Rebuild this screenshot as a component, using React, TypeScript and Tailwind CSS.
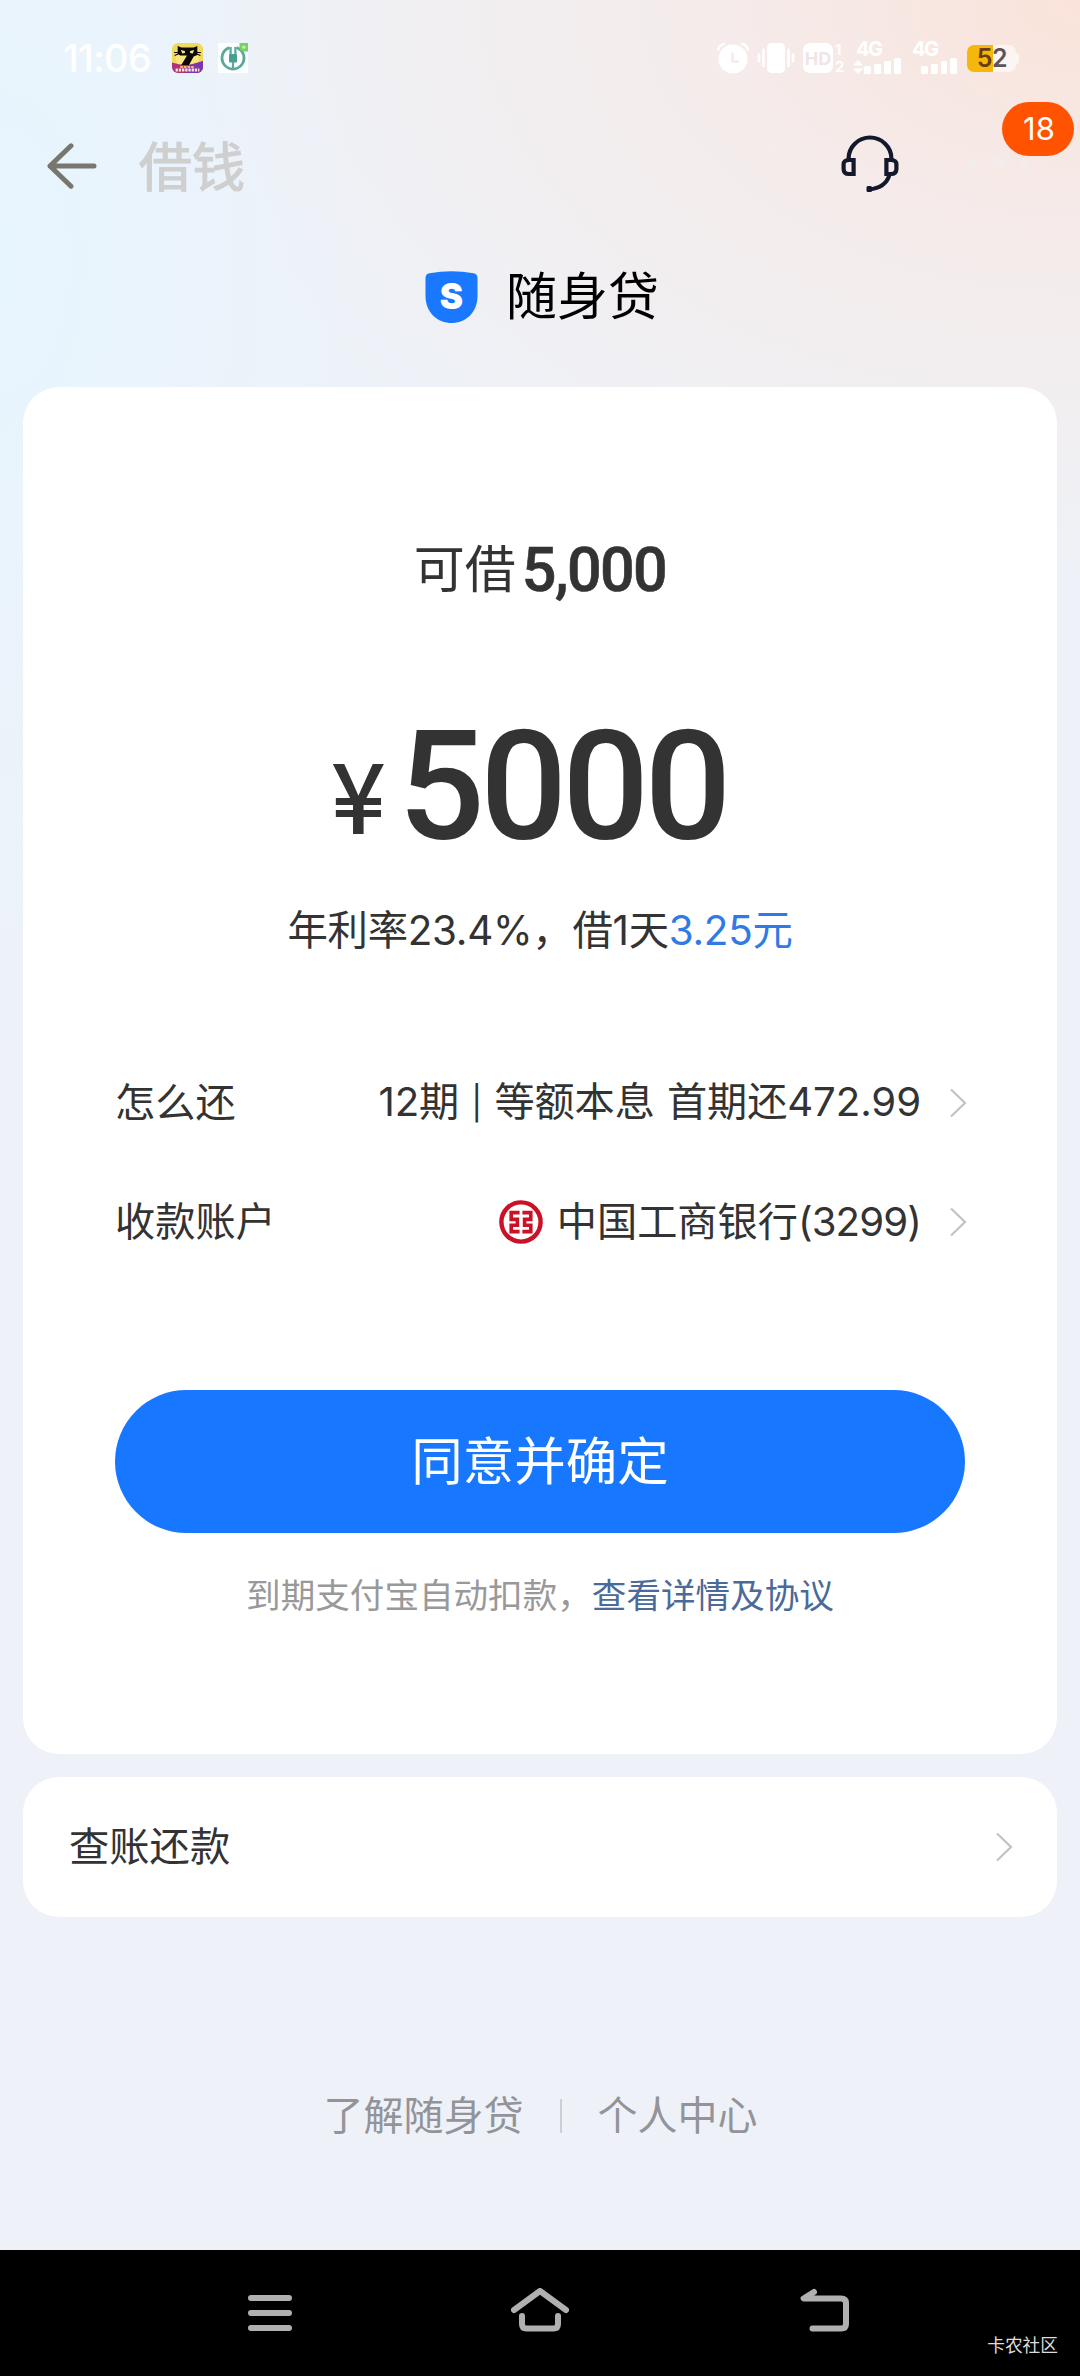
import React from 'react';

const CatAppIcon: React.FC = () => (
  <svg width="31" height="30" viewBox="0 0 30 30" preserveAspectRatio="none" className="block">
    <defs>
      <clipPath id="cat-clip">
        <rect width="30" height="30" rx="6" />
      </clipPath>
    </defs>
    <g clipPath="url(#cat-clip)">
      <rect width="30" height="30" fill="#f0d95c" />
      <circle cx="15" cy="15" r="11" fill="#fbe67c" />
      <path d="M0 19.5 Q15 25 30 18 V30 H0 Z" fill="#b0327e" />
      <path d="M13 23 L30 18 V30 H13 Z" fill="#7d35b4" />
      <path d="M5.5 3 L9 4.5 H21 L24.5 3 V12 L21 13.5 L16.5 22 H9 L14.5 12.5 H8 L5.5 11 Z" fill="#0d0906" />
      <path d="M2 9.5 H6 M24 9.5 H28 M2.5 12.5 L6 11 M27.5 12.5 L24 11" stroke="#0d0906" strokeWidth="1" />
      <path d="M8.5 7 L12.5 8 V10 L10 10.5 Z M21.5 7 L17.5 8 V10 L20 10.5 Z" fill="#f7e98a" />
      <path d="M3.5 27 H26.5" stroke="#ffe9d0" strokeWidth="3" strokeDasharray="2.2 0.9" />
      <path d="M8 24 H21" stroke="#ffb36b" strokeWidth="2" strokeDasharray="2.6 0.9" />
    </g>
  </svg>
);

const PlugAppIcon: React.FC = () => (
  <svg width="30" height="30" viewBox="0 0 30 30" className="block">
    <rect width="30" height="30" fill="#fdfefe" />
    <path d="M11.5 4.6 A11 11 0 1 0 18.5 4.6" fill="none" stroke="#5aa99b" strokeWidth="2.8" />
    <path d="M12.6 4 V11 M17.4 4 V11" stroke="#5aa99b" strokeWidth="2.2" />
    <rect x="11" y="11" width="8" height="8.5" rx="1" fill="#4b9f90" />
    <path d="M15 19 V27" stroke="#5aa99b" strokeWidth="2.2" />
    <path d="M21.5 0 H30 V8.5 H25 Q21.5 8 21.5 4 Z" fill="#79cf63" />
    <circle cx="25.8" cy="4.2" r="1.6" fill="#c9f0b8" />
  </svg>
);

const AlarmIcon: React.FC = () => (
  <svg width="34" height="32" viewBox="0 0 34 32" className="block">
    <circle cx="17" cy="17" r="14.5" fill="#fff" />
    <path d="M2 7.5 Q3.5 3 8 1.8 M32 7.5 Q30.5 3 26 1.8" fill="none" stroke="#fff" strokeWidth="2.4" strokeLinecap="round" />
    <path d="M16.6 10.5 V19.5 H23" fill="none" stroke="#f3e9e9" strokeWidth="2.2" />
  </svg>
);

const VibrateIcon: React.FC = () => (
  <svg width="38" height="32" viewBox="0 0 38 32" className="block">
    <rect x="10" y="1" width="18" height="30" rx="4.5" fill="#fff" />
    <path d="M6.5 8 V24 M31.5 8 V24" stroke="#fff" strokeWidth="2.8" strokeLinecap="round" />
    <path d="M2 13 V19 M36 13 V19" stroke="#fff" strokeWidth="2.8" strokeLinecap="round" />
  </svg>
);

const Bars: React.FC = () => (
  <div className="flex items-end gap-[3px]">
    <div className="h-[8px] w-[7px] rounded-[1.5px] bg-white" />
    <div className="h-[10px] w-[7px] rounded-[1.5px] bg-white" />
    <div className="h-[13px] w-[7px] rounded-[1.5px] bg-white" />
    <div className="h-[16px] w-[7px] rounded-[1.5px] bg-white" />
  </div>
);

const Chevron: React.FC = () => (
  <svg width="18" height="30" viewBox="0 0 18 30" className="block">
    <path d="M2 1.5 L16 15 L2 28.5" fill="none" stroke="#c2c2c2" strokeWidth="2.2" />
  </svg>
);

const HeadsetIcon: React.FC = () => (
  <svg width="58" height="58" viewBox="0 0 58 58" className="block">
    <g fill="none" stroke="#14182d" strokeWidth="4.2">
      <path d="M7.6 25 V23.5 A21.4 21 0 0 1 50.4 23.5 V25" />
      <path d="M12.6 25.5 V39 H8 Q2.6 39 2.6 34 V29.5 Q2.6 25 8 25 H12.6 Z" />
      <path d="M45.4 25.5 V39 H50 Q55.4 39 55.4 34 V29.5 Q55.4 25 50 25 H45.4 Z" />
      <path d="M48.4 40 Q44.5 53 28 54.4" />
    </g>
    <rect x="25.5" y="51" width="5.5" height="6" rx="1.5" fill="#14182d" />
  </svg>
);

const BankLogo: React.FC = () => (
  <svg width="44" height="44" viewBox="0 0 44 44" className="block">
    <circle cx="22" cy="22" r="19.6" fill="none" stroke="#cb1126" strokeWidth="4.4" />
    <g fill="none" stroke="#cb1126" strokeWidth="3.6">
      <path d="M20.6 12.6 H12.2 V19.4 H18.4 V25.2 H12.2 V31.6 H20.6" />
      <path d="M23.4 12.6 H31.8 V19.4 H25.6 V25.2 H31.8 V31.6 H23.4" />
    </g>
  </svg>
);

const App: React.FC = () => {
  const rows = [
    {
      label: '怎么还',
      value: (
        <span className="tracking-[-0.1px] [word-spacing:1px]">
          12期 <span className="relative -top-[1px] text-[33px]">|</span> 等额本息 首期还472.99
        </span>
      ),
      logo: null
    },
    {
      label: '收款账户',
      value: (
        <span>
          中国工商银行<span className="tracking-[-0.9px]">(3299)</span>
        </span>
      ),
      logo: <BankLogo />
    }
  ];

  return (
    <div className="flex h-[2376px] w-[1080px] flex-col overflow-hidden bg-[#eef2f8] bg-[radial-gradient(900px_600px_at_100%_0%,#fae3da_0%,rgba(247,233,230,0.75)_40%,rgba(238,242,248,0)_100%),radial-gradient(400px_800px_at_0%_260px,#e7f5fe_0%,rgba(238,242,248,0)_100%)] font-[Inter,'Noto_Sans_CJK_SC',sans-serif] text-[#333333]">
      {/* Status bar */}
      <div className="flex h-[88px] shrink-0 items-center pl-[63px] pr-[61px] pt-[28px]">
        <div className="w-[109px] whitespace-nowrap text-[38px] leading-[60px] font-medium tracking-[-0.7px] text-white">11:06</div>
        <CatAppIcon />
        <div className="w-[15px]" />
        <PlugAppIcon />
        <div className="ml-auto flex items-center text-white">
          <AlarmIcon />
          <div className="w-[7px]" />
          <VibrateIcon />
          <div className="ml-[8px] flex h-[30px] w-[30px] items-center justify-center rounded-[7px] bg-white text-[18px] font-bold text-[#efe5e5]">HD</div>
          <div className="ml-[2px] flex h-[32px] w-[12px] flex-col justify-between text-[15px] leading-[15px] font-bold">
            <span>1</span>
            <span>2</span>
          </div>
          <div className="ml-[6px] flex h-[32px] w-[48px] flex-col justify-between">
            <span className="pl-[3px] text-[20px] leading-[15px] font-bold tracking-[-1.5px]">4G</span>
            <div className="flex items-end gap-[1px]">
              <svg width="10" height="14" viewBox="0 0 10 14">
                <path d="M5 0 L10 5.5 H0 Z M5 14 L10 8.5 H0 Z" fill="#fff" />
              </svg>
              <Bars />
            </div>
          </div>
          <div className="ml-[11px] flex h-[32px] w-[45px] flex-col justify-between">
            <span className="text-[20px] leading-[15px] font-bold tracking-[-1.5px]">4G</span>
            <div className="pl-[9px]">
              <Bars />
            </div>
          </div>
          <div className="ml-[10px] flex items-center">
            <div className="flex h-[27px] w-[49px] items-center justify-center rounded-[7px] bg-[linear-gradient(90deg,#f6b70d_26px,rgba(255,255,255,0.6)_26px)] pl-[1px] text-[25px] leading-[27px] font-semibold tracking-[-0.5px]">
              <span className="text-[#6b3d0c]">5</span>
              <span className="text-[#5d5657]">2</span>
            </div>
            <div className="h-[11px] w-[3px] rounded-r-full bg-white/60" />
          </div>
        </div>
      </div>

      {/* Title bar */}
      <header className="relative flex h-[156px] shrink-0 items-center pl-[47px]">
        <svg width="50" height="46" viewBox="0 0 50 46" fill="none" stroke="#77776f" strokeWidth="5" strokeLinecap="round" strokeLinejoin="round">
          <path d="M47 23 H3 M24 2.8 L3 23 L24 43.2" />
        </svg>
        <h1 className="ml-[42px] pt-[3px] text-[53px] leading-[60px] font-normal text-[#cfcfcf] [-webkit-text-stroke:1.2px_#cfcfcf]">借钱</h1>
        <div className="ml-auto mr-[181px] pb-[4px]">
          <HeadsetIcon />
        </div>
        <div className="absolute top-[68px] left-[970px] flex items-center gap-[14px]">
          <div className="h-[8px] w-[8px] rounded-full bg-[#f2ecea]" />
          <div className="h-[14px] w-[14px] rounded-full bg-[#f2ecea]" />
          <div className="h-[8px] w-[8px] rounded-full bg-[#f2ecea]" />
        </div>
        <div className="absolute top-[14px] left-[1002px] flex h-[54px] w-[72px] items-center justify-center rounded-full bg-[#ff5302] pl-[2px] text-[31px] text-white">18</div>
      </header>

      {/* Brand */}
      <div className="flex h-[106px] shrink-0 items-center justify-center pl-[4px]">
        <div className="relative flex h-[52px] w-[53px] items-center justify-center">
          <svg width="53" height="52" viewBox="0 0 53 52" className="absolute inset-0">
            <path d="M0.5 7 Q0.5 3 4.5 2.2 Q26.5 -1.6 48.5 2.2 Q52.5 3 52.5 7 V25 C52.5 42 40 52 26.5 52 C13 52 0.5 42 0.5 25 Z" fill="#1a77ff" />
          </svg>
          <span className="relative -top-[1px] text-[35px] leading-[52px] font-black text-white">S</span>
        </div>
        <span className="ml-[28px] text-[51px] leading-[60px] text-black">随身贷</span>
      </div>

      {/* Loan card */}
      <section className="mx-[23px] mt-[37px] flex h-[1367px] shrink-0 flex-col items-center rounded-[36px] bg-white">
        <div className="mt-[153px] flex h-[60px] items-center">
          <span className="text-[51px] leading-[60px]">可借</span>
          <span className="ml-[6px] font-[Roboto] text-[61px] leading-[60px] font-medium tracking-[-1.6px] [-webkit-text-stroke:0.6px_#333333]">5,000</span>
        </div>
        <div className="mt-[127px] flex h-[120px] w-full items-baseline pl-[309px] leading-[120px]">
          <span className="relative -top-[6px] w-[66px] font-['Noto_Sans_CJK_SC'] text-[95px] font-normal [-webkit-text-stroke:2px_#333333]">¥</span>
          <span className="font-[Roboto] text-[153px] font-medium tracking-[-4.8px]">5000</span>
        </div>
        <p className="mt-[54px] h-[60px] whitespace-nowrap text-[40.4px] leading-[60px] tracking-[-0.3px]">
          年利率23.4%，借1天<span className="text-[#2f7ae5]">3.25元</span>
        </p>

        <div className="mt-[112px] flex w-full flex-col gap-[59px] pr-[90px] pl-[92px]">
          {rows.map((row) => (
            <div key={row.label} className="flex h-[60px] items-center whitespace-nowrap text-[40.2px] leading-[60px]">
              <span>{row.label}</span>
              <div className="ml-auto flex items-center gap-[14px]">
                {row.logo}
                {row.value}
              </div>
              <div className="ml-[28px]">
                <Chevron />
              </div>
            </div>
          ))}
        </div>

        <button className="mt-[138px] h-[143px] w-[850px] rounded-full bg-[#1877ff] text-[51.5px] text-white">
          同意并确定
        </button>
        <p className="mt-[37px] h-[50px] whitespace-nowrap text-[34.6px] leading-[50px] text-[#999999]">
          到期支付宝自动扣款，<span className="text-[#4a6a99]">查看详情及协议</span>
        </p>
      </section>

      {/* Repayment entry */}
      <section className="mx-[23px] mt-[23px] flex h-[140px] shrink-0 items-center justify-between rounded-[36px] bg-white pr-[44px] pl-[46px]">
        <span className="text-[40.3px] leading-[60px]">查账还款</span>
        <Chevron />
      </section>

      {/* Footer links */}
      <footer className="mt-[169px] flex h-[60px] shrink-0 items-center justify-center pl-[1px] text-[40px] leading-[60px] text-[#929499]">
        <span>了解随身贷</span>
        <div className="mx-[36px] h-[34px] w-[2px] bg-[#cccfd4]" />
        <span>个人中心</span>
      </footer>

      {/* System navigation */}
      <nav className="relative mt-auto flex h-[126px] shrink-0 items-center bg-black pl-[247px]">
        <svg width="46" height="38" viewBox="0 0 46 38" stroke="#b0b0b0" strokeWidth="6" strokeLinecap="round">
          <path d="M4 4 H42 M4 19 H42 M4 34 H42" />
        </svg>
        <svg width="58" height="44" viewBox="0 0 58 44" fill="none" stroke="#b0b0b0" strokeWidth="6" strokeLinecap="round" strokeLinejoin="round" className="ml-[218px] mb-[6px]">
          <path d="M3 22 L29 3 L55 22" />
          <path d="M11 28 V36 Q11 40.5 15.5 40.5 H42.5 Q47 40.5 47 36 V28" />
        </svg>
        <svg width="50" height="44" viewBox="0 0 50 44" fill="none" stroke="#b0b0b0" strokeWidth="6" strokeLinecap="round" strokeLinejoin="round" className="ml-[231px] mb-[6px]">
          <path d="M14 4 L3.6 10.5 H41 Q46 10.5 46 15 V36 Q46 40.5 41 40.5 H12.5" />
        </svg>
        <span className="absolute top-[83px] right-[22px] text-[17.7px] leading-[26px] text-[#dcdcdc]">卡农社区</span>
      </nav>
    </div>
  );
};

export default App;
